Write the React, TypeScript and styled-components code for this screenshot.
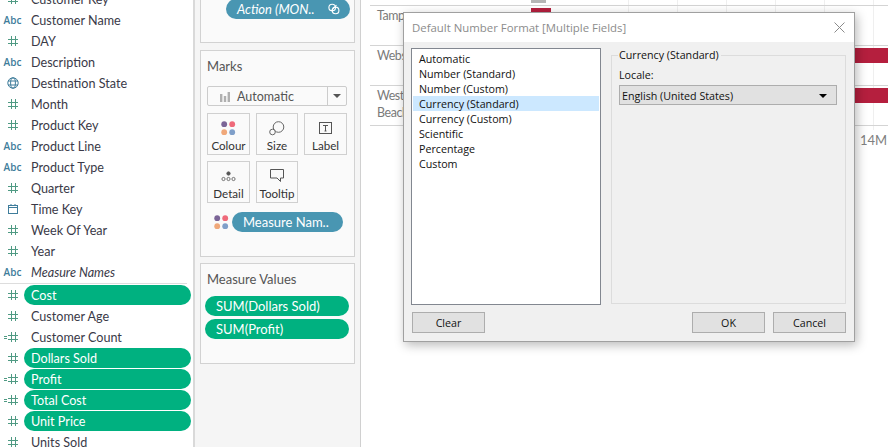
import React from 'react';
import styled, { createGlobalStyle } from 'styled-components';

const Global = createGlobalStyle`
  html, body { margin: 0; padding: 0; background: #fff; }
  #root { width: 888px; height: 447px; overflow: hidden; }
`;

const Page = styled.div`
  position: relative;
  display: flex;
  width: 888px;
  height: 447px;
  overflow: hidden;
  font-family: "Lato", "Liberation Sans", sans-serif;
`;

const Sidebar = styled.div`
  width: 193px;
  flex: none;
  background: #fff;
  border-right: 2px solid #d9d9d9;
  overflow: hidden;
`;
const FieldList = styled.div`
  margin-top: -11px;
`;
const Row = styled.div`
  display: flex;
  align-items: flex-start;
  height: 21px;
`;
const IconSlot = styled.div`
  width: 24px;
  height: 20px;
  flex: none;
  display: flex;
  align-items: center;
  justify-content: center;
  padding-left: 1px;
  box-sizing: border-box;
  color: #4f9a83;
`;
const AbcGlyph = styled.span`
  font: 600 10px "Open Sans", sans-serif;
  color: #3f7d9b;
`;
const FieldName = styled.div<{ $on?: boolean; $italic?: boolean }>`
  flex: none;
  width: 167px;
  height: 20px;
  box-sizing: border-box;
  padding: 1px 0 0 7px;
  line-height: 19px;
  font-size: 12.6px;
  border-radius: 10px;
  color: ${p => (p.$on ? '#fff' : '#3a3a48')};
  background: ${p => (p.$on ? '#00b180' : 'transparent')};
  font-style: ${p => (p.$italic ? 'italic' : 'normal')};
`;
const Divider = styled.div`
  height: 1px;
  width: 187px;
  background: #ddd;
  margin-bottom: 1px;
`;

const Shelf = styled.div`
  width: 166px;
  flex: none;
  box-sizing: border-box;
  background: #f5f5f5;
  border-right: 1px solid #d0d0d0;
  padding: 0 5px;
  display: flex;
  flex-direction: column;
  gap: 7px;
`;
const Card = styled.div<{ $h: number; $mt?: number }>`
  height: ${p => p.$h}px;
  margin-top: ${p => p.$mt ?? 0}px;
  box-sizing: border-box;
  width: 155px;
  background: #fafafa;
  border: 1px solid #d2d2d2;
  flex: none;
`;
const FiltersBody = styled.div`
  padding: 15px 4px 0 25px;
`;
const Pill = styled.div<{ $bg: string }>`
  height: 20px;
  border-radius: 10px;
  background: ${p => p.$bg};
  color: #fff;
  font-size: 13px;
  line-height: 20px;
  white-space: nowrap;
`;
const ActionPill = styled(Pill)`
  display: flex;
  align-items: center;
  justify-content: space-between;
  padding: 0 10px 0 11px;
  font-style: italic;
`;
const CardTitle = styled.div`
  font-size: 13px;
  color: #555;
  padding: 7px 0 0 6px;
  height: 27px;
  line-height: 17px;
`;
const MarkSelect = styled.div`
  margin: 1px 0 0 6px;
  width: 140px;
  height: 20px;
  box-sizing: border-box;
  border: 1px solid #ccc;
  border-radius: 2px;
  background: #fafafa;
  display: flex;
  align-items: center;
  font-size: 12.5px;
  line-height: 20px;
  color: #555;
`;
const MarkLabel = styled.div`
  flex: 1;
  display: flex;
  align-items: center;
  gap: 7px;
  padding: 2px 0 0 12px;
`;
const Caret = styled.div`
  width: 18px;
  height: 100%;
  border-left: 1px solid #ccc;
  display: flex;
  align-items: center;
  justify-content: center;
  &::after {
    content: '';
    border-left: 4px solid transparent;
    border-right: 4px solid transparent;
    border-top: 4px solid #555;
  }
`;
const MarkGrid = styled.div`
  margin: 7px 0 0 6px;
  display: grid;
  grid-template-columns: 43px 42px 43px;
  gap: 6px;
`;
const MarkBtn = styled.div`
  height: 42px;
  box-sizing: border-box;
  border: 1px solid #d0d0d0;
  display: flex;
  flex-direction: column;
  align-items: center;
  font-size: 11.6px;
  line-height: 14px;
  color: #333;
  padding-top: 6px;
  white-space: nowrap;
`;
const MarkIcon = styled.div`
  height: 16px;
  display: flex;
  align-items: center;
  margin-bottom: 3px;
`;
const MeasureRow = styled.div`
  margin: 9px 0 0 13px;
  display: flex;
  align-items: center;
  gap: 3px;
`;
const MeasurePill = styled(Pill)`
  width: 111px;
  padding-left: 11px;
  box-sizing: border-box;
`;
const ValuesTitle = styled(CardTitle)`
  height: 19px;
`;
const ValueList = styled.div`
  margin: 6px 0 0 4px;
  display: flex;
  flex-direction: column;
  gap: 3px;
`;
const ValuePill = styled(Pill)`
  width: 144px;
  padding-left: 11px;
  box-sizing: border-box;
`;

const Canvas = styled.div`
  position: relative;
  flex: 1;
  background: #fff;
`;
const GridLine = styled.div<{ $x: number }>`
  position: absolute;
  top: 0;
  bottom: 317px;
  left: ${p => p.$x}px;
  width: 1px;
  background: #efefef;
`;
const RowLine = styled.div<{ $y: number }>`
  position: absolute;
  left: 9px;
  right: 0;
  top: ${p => p.$y}px;
  height: 1px;
  background: #d4d4d4;
`;
const RowLabel = styled.div<{ $y: number }>`
  position: absolute;
  left: 16px;
  top: ${p => p.$y}px;
  font-size: 12.4px;
  letter-spacing: -0.4px;
  line-height: 17px;
  color: #7a7a7a;
`;
const Bar = styled.div<{ $x: number; $y: number; $w: number; $h: number; $c: string }>`
  position: absolute;
  left: ${p => p.$x}px;
  top: ${p => p.$y}px;
  width: ${p => p.$w}px;
  height: ${p => p.$h}px;
  background: ${p => p.$c};
`;
const Tick = styled.div`
  position: absolute;
  left: 499px;
  top: 132px;
  font-size: 13px;
  line-height: 17px;
  color: #808080;
`;

const Dialog = styled.div`
  position: absolute;
  left: 403px;
  top: 12px;
  width: 452px;
  height: 330px;
  box-sizing: border-box;
  border: 1px solid #a0a0a0;
  background: #f0f0f0;
  box-shadow: 2px 3px 10px rgba(0,0,0,0.28);
  font-family: "Open Sans", "Noto Sans", sans-serif;
  font-size: 10.7px;
  color: #111;
  display: flex;
  flex-direction: column;
`;
const TitleBar = styled.div`
  height: 29px;
  flex: none;
  background: #fff;
  display: flex;
  align-items: center;
  justify-content: space-between;
  padding: 0 9px 0 8px;
  color: #8c8c8c;
  font-size: 11.4px;
`;
const DialogBody = styled.div`
  flex: 1;
  padding: 6px 8px 8px 7px;
  display: flex;
  flex-direction: column;
`;
const Columns = styled.div`
  display: flex;
  gap: 10px;
  height: 257px;
`;
const ListBox = styled.div`
  width: 190px;
  height: 257px;
  box-sizing: border-box;
  flex: none;
  background: #fff;
  border: 1px solid #828790;
  padding: 2px 1px;
`;
const ListItem = styled.div<{ $sel?: boolean }>`
  height: 15px;
  box-sizing: border-box;
  padding: 1px 0 0 6px;
  line-height: 14px;
  background: ${p => (p.$sel ? '#cce8ff' : 'transparent')};
`;
const GroupBox = styled.div`
  position: relative;
  margin-top: 7px;
  width: 236px;
  height: 249px;
  box-sizing: border-box;
  border: 1px solid #dcdcdc;
  padding: 12px 8px 0 7px;
`;
const Legend = styled.div`
  position: absolute;
  left: 6px;
  top: -8px;
  padding: 0 2px 0 1px;
  background: #f0f0f0;
  line-height: 15px;
`;
const FieldLabel = styled.div`
  line-height: 15px;
  margin-bottom: 2px;
`;
const Select = styled.div`
  height: 20px;
  width: 218px;
  box-sizing: border-box;
  background: #e1e1e1;
  border: 1px solid #adadad;
  display: flex;
  align-items: center;
  justify-content: space-between;
  padding: 1px 9px 0 2px;
  &::after {
    content: '';
    border-left: 4px solid transparent;
    border-right: 4px solid transparent;
    border-top: 4px solid #000;
  }
`;
const Footer = styled.div`
  margin-top: 7px;
  display: flex;
  gap: 8px;
  padding-left: 1px;
`;
const Btn = styled.div`
  width: 73px;
  height: 21px;
  box-sizing: border-box;
  background: #e1e1e1;
  border: 1px solid #adadad;
  display: flex;
  align-items: center;
  justify-content: center;
`;
const Spacer = styled.div`
  flex: 1;
`;

const Hash = () => (
  <svg width="10" height="10" viewBox="0 0 10 10" fill="none" stroke="currentColor" strokeWidth="1">
    <path d="M3.5 0v10M7.5 0v10M0 3.5h10M0 7.5h10" />
  </svg>
);
const CalcHash = () => (
  <svg width="14" height="10" viewBox="0 0 14 10" fill="none" stroke="currentColor" strokeWidth="1" style={{ marginLeft: -3 }}>
    <path d="M7.5 0v10M11.5 0v10M4 3.5h10M4 7.5h10M0 4.5h3M0 6.5h3" />
  </svg>
);
const Globe = () => (
  <svg width="12" height="12" viewBox="0 0 12 12" fill="none" stroke="#3f7d9b" strokeWidth="1">
    <circle cx="6" cy="6" r="5.2" />
    <ellipse cx="6" cy="6" rx="2.4" ry="5.2" />
    <path d="M1 4h10M1 8h10" />
  </svg>
);
const Cal = () => (
  <svg width="10" height="10" viewBox="0 0 10 10" fill="none" stroke="#3f7d9b" strokeWidth="1">
    <rect x="0.5" y="1.5" width="9" height="8" />
    <path d="M0.5 3.5h9M3 0v2M7 0v2" />
  </svg>
);
const Dots = () => (
  <svg width="15" height="15" viewBox="0 0 15 15">
    <circle cx="3.2" cy="3.2" r="2.9" fill="#7b6597" />
    <circle cx="11.2" cy="3.2" r="2.9" fill="#ef6a7a" />
    <circle cx="3.2" cy="11.2" r="2.9" fill="#f0a87a" />
    <circle cx="11.2" cy="11.2" r="2.9" fill="#7f9fc9" />
  </svg>
);
const SizeIcon = () => (
  <svg width="16" height="15" viewBox="0 0 16 15" fill="none" stroke="#666" strokeWidth="1">
    <circle cx="9.5" cy="6" r="5.3" />
    <circle cx="3.5" cy="11" r="2.8" fill="#fafafa" />
  </svg>
);
const LabelIcon = () => (
  <svg width="13" height="13" viewBox="0 0 13 13" fill="none" stroke="#555" strokeWidth="1">
    <rect x="0.5" y="0.5" width="12" height="11" />
    <path d="M4 3.5h5M6.5 3.5v5.5M5.5 9h2" />
  </svg>
);
const DetailIcon = () => (
  <svg width="15" height="11" viewBox="0 0 15 11" fill="none" stroke="#555" strokeWidth="0.8">
    <circle cx="7.5" cy="2.5" r="1.7" fill="#555" />
    <circle cx="2.5" cy="8" r="1.6" />
    <circle cx="7.5" cy="8" r="1.6" />
    <circle cx="12.5" cy="8" r="1.6" />
  </svg>
);
const TooltipIcon = () => (
  <svg width="15" height="14" viewBox="0 0 15 14" fill="none" stroke="#555" strokeWidth="1">
    <path d="M0.5 0.5h13v8.5h-3v3.5l-3.5-3.5h-6.5z" />
  </svg>
);
const BarsIcon = () => (
  <svg width="10" height="10" viewBox="0 0 10 10" fill="#b0b0b0">
    <rect x="0" y="2" width="2.4" height="8" />
    <rect x="3.8" y="4" width="2.4" height="6" />
    <rect x="7.6" y="0" width="2.4" height="10" />
  </svg>
);
const LinkIcon = () => (
  <svg width="12" height="12" viewBox="0 0 12 12" fill="none" stroke="#fff" strokeWidth="1.1">
    <circle cx="4.2" cy="4.6" r="3.3" />
    <circle cx="7.6" cy="7.4" r="3.3" />
    <path d="M3 8l5.5-6" />
  </svg>
);
const CloseIcon = () => (
  <svg width="11" height="11" viewBox="0 0 11 11" stroke="#8a8a8a" strokeWidth="1" fill="none">
    <path d="M0.5 0.5l10 10M10.5 0.5l-10 10" />
  </svg>
);

type Kind = 'abc' | 'hash' | 'calc' | 'globe' | 'cal';
const iconFor = (k: Kind) => {
  if (k === 'abc') return <AbcGlyph>Abc</AbcGlyph>;
  if (k === 'hash') return <Hash />;
  if (k === 'calc') return <CalcHash />;
  if (k === 'globe') return <Globe />;
  return <Cal />;
};

const dims: [Kind, string][] = [
  ['hash', 'Customer Key'],
  ['abc', 'Customer Name'],
  ['hash', 'DAY'],
  ['abc', 'Description'],
  ['globe', 'Destination State'],
  ['hash', 'Month'],
  ['hash', 'Product Key'],
  ['abc', 'Product Line'],
  ['abc', 'Product Type'],
  ['hash', 'Quarter'],
  ['cal', 'Time Key'],
  ['hash', 'Week Of Year'],
  ['hash', 'Year'],
];
const measures: [Kind, string, boolean][] = [
  ['hash', 'Cost', true],
  ['hash', 'Customer Age', false],
  ['calc', 'Customer Count', false],
  ['hash', 'Dollars Sold', true],
  ['calc', 'Profit', true],
  ['calc', 'Total Cost', true],
  ['hash', 'Unit Price', true],
  ['hash', 'Units Sold', false],
];
const formats = ['Automatic', 'Number (Standard)', 'Number (Custom)', 'Currency (Standard)', 'Currency (Custom)', 'Scientific', 'Percentage', 'Custom'];

export default function App() {
  return (
    <Page>
      <Global />
      <Sidebar>
        <FieldList>
          {dims.map(([k, n]) => (
            <Row key={n}>
              <IconSlot>{iconFor(k)}</IconSlot>
              <FieldName>{n}</FieldName>
            </Row>
          ))}
          <Row>
            <IconSlot>{iconFor('abc')}</IconSlot>
            <FieldName $italic>Measure Names</FieldName>
          </Row>
          <Divider />
          {measures.map(([k, n, on]) => (
            <Row key={n}>
              <IconSlot>{iconFor(k)}</IconSlot>
              <FieldName $on={on}>{n}</FieldName>
            </Row>
          ))}
        </FieldList>
      </Sidebar>
      <Shelf>
        <Card $h={60} $mt={-17}>
          <FiltersBody>
            <ActionPill $bg="#4996b2">
              <span>Action (MON..</span>
              <LinkIcon />
            </ActionPill>
          </FiltersBody>
        </Card>
        <Card $h={207}>
          <CardTitle>Marks</CardTitle>
          <MarkSelect>
            <MarkLabel><BarsIcon />Automatic</MarkLabel>
            <Caret />
          </MarkSelect>
          <MarkGrid>
            <MarkBtn><MarkIcon><Dots /></MarkIcon>Colour</MarkBtn>
            <MarkBtn><MarkIcon><SizeIcon /></MarkIcon>Size</MarkBtn>
            <MarkBtn><MarkIcon><LabelIcon /></MarkIcon>Label</MarkBtn>
            <MarkBtn><MarkIcon><DetailIcon /></MarkIcon>Detail</MarkBtn>
            <MarkBtn><MarkIcon><TooltipIcon /></MarkIcon>Tooltip</MarkBtn>
          </MarkGrid>
          <MeasureRow>
            <Dots />
            <MeasurePill $bg="#4996b2">Measure Nam..</MeasurePill>
          </MeasureRow>
        </Card>
        <Card $h={101} $mt={-1}>
          <ValuesTitle>Measure Values</ValuesTitle>
          <ValueList>
            <ValuePill $bg="#00b180">SUM(Dollars Sold)</ValuePill>
            <ValuePill $bg="#00b180">SUM(Profit)</ValuePill>
          </ValueList>
        </Card>
      </Shelf>
      <Canvas>
        {[267, 316, 365, 414, 463, 512].map(x => <GridLine key={x} $x={x} />)}
        {[5, 45, 85, 125].map(y => <RowLine key={y} $y={y} />)}
        <RowLabel $y={7}>Tampa</RowLabel>
        <RowLabel $y={47}>Website</RowLabel>
        <RowLabel $y={87}>West<br />Beach</RowLabel>
        <Bar $x={170} $y={0} $w={15} $h={3} $c="#b5b5b5" />
        <Bar $x={170} $y={8} $w={20} $h={5} $c="#b51f3e" />
        <Bar $x={480} $y={48} $w={47} $h={15} $c="#b51f3e" />
        <Bar $x={480} $y={88} $w={47} $h={15} $c="#b51f3e" />
        <Tick>14M</Tick>
      </Canvas>
      <Dialog>
        <TitleBar>
          <span>Default Number Format [Multiple Fields]</span>
          <CloseIcon />
        </TitleBar>
        <DialogBody>
          <Columns>
            <ListBox>
              {formats.map(f => <ListItem key={f} $sel={f === 'Currency (Standard)'}>{f}</ListItem>)}
            </ListBox>
            <GroupBox>
              <Legend>Currency (Standard)</Legend>
              <FieldLabel>Locale:</FieldLabel>
              <Select>English (United States)</Select>
            </GroupBox>
          </Columns>
          <Footer>
            <Btn>Clear</Btn>
            <Spacer />
            <Btn>OK</Btn>
            <Btn>Cancel</Btn>
          </Footer>
        </DialogBody>
      </Dialog>
    </Page>
  );
}
